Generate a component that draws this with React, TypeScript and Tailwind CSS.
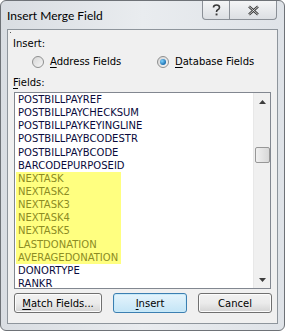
import React from 'react';

const fields = [
  'POSTBILLPAYREF',
  'POSTBILLPAYCHECKSUM',
  'POSTBILLPAYKEYINGLINE',
  'POSTBILLPAYBCODESTR',
  'POSTBILLPAYBCODE',
  'BARCODEPURPOSEID',
  'NEXTASK',
  'NEXTASK2',
  'NEXTASK3',
  'NEXTASK4',
  'NEXTASK5',
  'LASTDONATION',
  'AVERAGEDONATION',
  'DONORTYPE',
  'RANKR',
];

const highlighted = new Set([
  'NEXTASK',
  'NEXTASK2',
  'NEXTASK3',
  'NEXTASK4',
  'NEXTASK5',
  'LASTDONATION',
  'AVERAGEDONATION',
]);

function Radio({ checked, label, accel }: { checked?: boolean; label: string; accel: string }) {
  return (
    <div className="flex items-center gap-[6px]">
      <span className="w-[12px] h-[12px] rounded-full border border-[#8e8f8f] bg-gradient-to-br from-[#d6d6d6] to-[#f6f6f6] flex items-center justify-center">
        {checked && (
          <span className="w-[6px] h-[6px] rounded-full bg-[radial-gradient(circle_at_35%_35%,#7ed3ff,#1b6fb0_70%)]" />
        )}
      </span>
      <span>
        <span className="underline underline-offset-[2px]">{accel}</span>
        {label.slice(1)}
      </span>
    </div>
  );
}

function Button({ children, focus, w }: { children: React.ReactNode; focus?: boolean; w: string }) {
  return (
    <div
      className={`${w} h-[20px] rounded-[3px] border flex items-center justify-center ${
        focus
          ? 'border-[#3c7fb1] bg-gradient-to-b from-[#e5f4fc] to-[#c4e5f6] shadow-[inset_0_0_0_1px_#c8eaf9]'
          : 'border-[#707070] bg-gradient-to-b from-[#f2f2f2] via-[#ebebeb] to-[#d4d4d4] shadow-[inset_0_0_0_1px_#fcfcfc]'
      }`}
    >
      {children}
    </div>
  );
}

export default function App() {
  return (
    <div
      className="w-[285px] h-[331px] overflow-hidden bg-white text-[#000] text-[10px]"
      style={{ fontFamily: 'Tahoma, "DejaVu Sans", sans-serif' }}
    >
      <div className="w-full h-full rounded-[6px] border border-[#6e7277] bg-gradient-to-r from-[#d9dde2] via-[#e9ecef] to-[#dfe3e8] flex flex-col">
        {/* title bar */}
        <div className="h-[28px] flex items-start shrink-0">
          <span
            className="pl-[6px] pt-[6px] text-[12px] text-[#000]"
            style={{ fontFamily: 'Lato, "Noto Sans", sans-serif' }}
          >
            Insert Merge Field
          </span>
          <div className="ml-auto mr-[7px] flex h-[19px] border border-t-0 border-[#8b9097] rounded-b-[4px] bg-gradient-to-b from-[#f4f5f6] to-[#dcdfe3] overflow-hidden">
            <div className="w-[27px] flex items-center justify-center border-r border-[#8b9097] text-[#444]">
              <svg width="9" height="12" viewBox="0 0 9 12">
                <path d="M1.5 3.5 Q1.5 1 4.5 1 Q7.5 1 7.5 3.5 Q7.5 5 5.5 6 Q4.5 6.6 4.5 8" fill="none" stroke="#3a3a3a" strokeWidth="1.6" />
                <rect x="3.6" y="9.5" width="1.9" height="1.9" fill="#3a3a3a" />
              </svg>
            </div>
            <div className="w-[46px] flex items-center justify-center">
              <svg width="13" height="11" viewBox="0 0 13 11">
                <path d="M2 1.5 L11 9.5 M11 1.5 L2 9.5" stroke="#3a3a3a" strokeWidth="2.4" />
                <path d="M2 1.5 L11 9.5 M11 1.5 L2 9.5" stroke="#f2f2f2" strokeWidth="0.8" />
              </svg>
            </div>
          </div>
        </div>
        {/* client */}
        <div className="mx-[6px] h-[295px] border border-[#8e959c] bg-[#f0f0f0] flex flex-col relative">
          <span className="absolute left-[2px] top-[2px] w-[1px] h-[1px] bg-[#555]" />
          <div className="pl-[5px] pt-[7px] h-[13px] leading-[13px] box-content">Insert:</div>
          <div className="flex pt-[5px] h-[13px] leading-[13px] box-content">
            <div className="pl-[24px] w-[149px]">
              <Radio label="Address Fields" accel="A" />
            </div>
            <Radio checked label="Database Fields" accel="D" />
          </div>
          <div className="pl-[5px] pt-[8px] h-[13px] leading-[13px] box-content">
            <span className="underline underline-offset-[2px]">F</span>ields:
          </div>
          <div className="ml-[6px] mt-[3px] w-[257px] h-[197px] border border-[#828790] bg-white flex">
            <div className="flex-1 pl-[1px] overflow-hidden">
              {fields.map((f) => (
                <div key={f} className="h-[13.15px] leading-[13.15px] flex">
                  <span
                    className={`pl-[2px] ${
                      highlighted.has(f) ? 'bg-[#ffff80] text-[#8c8c24] w-[105px]' : 'text-[#0a0a3c]'
                    }`}
                  >
                    {f}
                  </span>
                </div>
              ))}
            </div>
            <div className="w-[17px] bg-[#f0f0f0] border-l border-[#e8e8e8] flex flex-col items-center">
              <div className="h-[17px] flex items-center justify-center">
                <svg width="7" height="4" viewBox="0 0 7 4">
                  <path d="M0 4 L3.5 0 L7 4 Z" fill="#3d3d3d" />
                </svg>
              </div>
              <div className="mt-[37px] w-[15px] h-[16px] rounded-[2px] border border-[#979797] bg-gradient-to-r from-[#f0f0f0] to-[#d8d8d8]" />
              <div className="mt-auto h-[17px] flex items-center justify-center">
                <svg width="7" height="4" viewBox="0 0 7 4">
                  <path d="M0 0 L3.5 4 L7 0 Z" fill="#3d3d3d" />
                </svg>
              </div>
            </div>
          </div>
          <div className="flex pl-[6px] mt-[4px] gap-[11px]">
            <Button w="w-[88px]">
              <span>
                <span className="underline underline-offset-[2px]">M</span>atch Fields...
              </span>
            </Button>
            <Button w="w-[74px]" focus>
              <span>
                <span className="underline underline-offset-[2px]">I</span>nsert
              </span>
            </Button>
            <Button w="w-[74px]">Cancel</Button>
          </div>
        </div>
      </div>
    </div>
  );
}
